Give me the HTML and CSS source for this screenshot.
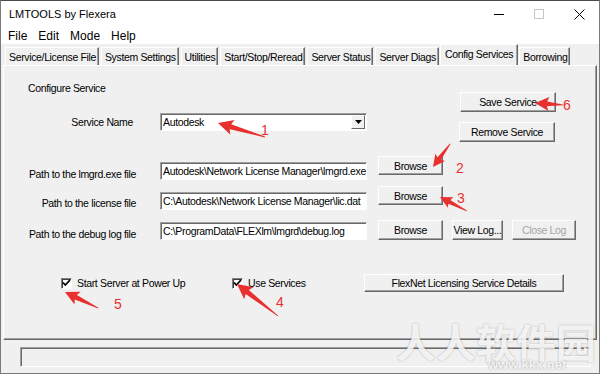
FILE: index.html
```html
<!DOCTYPE html>
<html lang="en">
<head>
    <meta charset="UTF-8">
    <title>LMTOOLS by Flexera</title>
    <link rel="stylesheet" href="styles.css">
</head>
<body>
    <div class="window">
        <div class="titlebar">
            <span class="title">LMTOOLS by Flexera</span>
            <span class="ctl">
                <svg width="10" height="10" viewBox="0 0 10 10"><path d="M0 5.5H10" stroke="#000" stroke-width="1"/></svg>
            </span>
            <span class="ctl">
                <svg width="10" height="10" viewBox="0 0 10 10"><rect x="0.5" y="0.5" width="9" height="9" fill="none" stroke="#c6c6c6"/></svg>
            </span>
            <span class="ctl">
                <svg width="11" height="11" viewBox="0 0 11 11"><path d="M0.5 0.5L10.5 10.5M10.5 0.5L0.5 10.5" stroke="#000" stroke-width="1"/></svg>
            </span>
        </div>
        <div class="menubar">
            <span>File</span>
            <span>Edit</span>
            <span>Mode</span>
            <span>Help</span>
        </div>

        <div class="tabs">
            <div class="tab">Service/License File</div>
            <div class="tab">System Settings</div>
            <div class="tab">Utilities</div>
            <div class="tab">Start/Stop/Reread</div>
            <div class="tab">Server Status</div>
            <div class="tab">Server Diags</div>
            <div class="tab active">Config Services</div>
            <div class="tab">Borrowing</div>
        </div>

        <div class="panel">
            <div class="top">
                <div class="top-left">
                    <div class="heading">Configure Service</div>
                    <div class="service-row">
                        <span class="label label-service">Service Name</span>
                        <div class="field combo">
                            <span>Autodesk</span>
                            <span class="drop">
                                <svg width="7" height="4" viewBox="0 0 7 4"><path d="M0 0H7L3.5 4Z" fill="#000"/></svg>
                            </span>
                        </div>
                    </div>
                </div>
                <div class="top-right">
                    <button class="btn btn-save">Save Service</button>
                    <button class="btn btn-remove">Remove Service</button>
                </div>
            </div>

            <div class="path-row">
                <span class="label l1">Path to the lmgrd.exe file</span>
                <div class="field">Autodesk\Network License Manager\lmgrd.exe</div>
                <button class="btn browse">Browse</button>
            </div>
            <div class="path-row">
                <span class="label l2">Path to the license file</span>
                <div class="field">C:\Autodesk\Network License Manager\lic.dat</div>
                <button class="btn browse">Browse</button>
            </div>
            <div class="path-row">
                <span class="label l1">Path to the debug log file</span>
                <div class="field">C:\ProgramData\FLEXlm\lmgrd\debug.log</div>
                <button class="btn browse low">Browse</button>
                <button class="btn viewlog low">View Log...</button>
                <button class="btn closelog low" disabled>Close Log</button>
            </div>

            <div class="check-row">
                <label class="check check-power">
                    <span class="box"><svg width="9" height="8" viewBox="0 0 9 8"><path d="M1 3.5L3.3 6L8 1" fill="none" stroke="#000" stroke-width="1.8"/></svg></span>
                    Start Server at Power Up
                </label>
                <label class="check check-services">
                    <span class="box"><svg width="9" height="8" viewBox="0 0 9 8"><path d="M1 3.5L3.3 6L8 1" fill="none" stroke="#000" stroke-width="1.8"/></svg></span>
                    Use Services
                </label>
                <button class="btn details">FlexNet Licensing Service Details</button>
            </div>
        </div>

        <div class="statusbar"></div>

        <div class="watermark">人人软件园</div>
        <div class="watermark-url">www.kkx.net</div>

        <svg class="notes" width="600" height="374" viewBox="0 0 600 374">
            <g fill="#e8312f">
                <path transform="translate(218 123) rotate(16.6)" d="M0 0L15 -7.5L13 -2.6L49 -0.4L49 0.4L13 2.6L15 7.5Z"/>
                <path transform="translate(433 167) rotate(-53.5)" d="M0 0L12 -6L10.5 -2.2L29 -0.4L29 0.4L10.5 2.2L12 6Z"/>
                <path transform="translate(440 197) rotate(27.4)" d="M0 0L12 -6L10.5 -2.2L30 -0.4L30 0.4L10.5 2.2L12 6Z"/>
                <path transform="translate(237 284) rotate(38)" d="M0 0L15 -7.5L13 -2.6L52 -0.4L52 0.4L13 2.6L15 7.5Z"/>
                <path transform="translate(65 292) rotate(25.9)" d="M0 0L14 -7L12 -2.4L37 -0.4L37 0.4L12 2.4L14 7Z"/>
                <path transform="translate(535 103) rotate(4)" d="M0 0L14 -7L12 -2.4L28 -0.4L28 0.4L12 2.4L14 7Z"/>
                <text class="num" x="265" y="135">1</text>
                <text class="num" x="460" y="173">2</text>
                <text class="num" x="461" y="203">3</text>
                <text class="num" x="280" y="307">4</text>
                <text class="num" x="118" y="309">5</text>
                <text class="num" x="567" y="110">6</text>
            </g>
        </svg>
    </div>
</body>
</html>
```

FILE: styles.css
```css
body {
    margin: 0;
    background: #ffffff;
}
.window {
    position: relative;
    width: 600px;
    height: 374px;
    box-sizing: border-box;
    border: 1px solid #7a7a7a;
    border-top-color: #4a4a4a;
    background-color: #f0f0f0;
    overflow: hidden;
    font-family: "Liberation Sans", Arial, sans-serif;
    font-size: 10.5px;
    letter-spacing: -0.35px;
    color: #000;
}
.titlebar {
    height: 26px;
    display: flex;
    align-items: center;
    background-color: #fff;
}
.title {
    flex: 1;
    padding-left: 8px;
    font-size: 11px;
    letter-spacing: 0;
}
.ctl {
    width: 40px;
    height: 26px;
    display: flex;
    align-items: center;
    justify-content: center;
}
.menubar {
    height: 17px;
    display: flex;
    align-items: center;
    gap: 11px;
    padding-left: 7px;
    background-color: #fff;
    font-size: 12px;
    letter-spacing: 0;
}

/* tabs */
.tabs {
    display: flex;
    gap: 2px;
    height: 18px;
    margin-top: 3px;
    padding-left: 4px;
    position: relative;
    z-index: 2;
}
.tab {
    height: 18px;
    box-sizing: border-box;
    padding: 0 2px 0 3px;
    line-height: 18px;
    border-top: 1px solid #fff;
    border-left: 1px solid #fff;
    border-right: 1px solid #696969;
    box-shadow: inset -1px 0 #a0a0a0;
    white-space: nowrap;
}
.tab.active {
    height: 21px;
    margin-top: -3px;
    margin-left: -1px;
    margin-right: -1px;
    padding: 0 4px 0 4px;
    line-height: 19px;
    background-color: #f0f0f0;
}
.panel {
    height: 275px;
    margin: 0 2px;
    box-sizing: border-box;
    border: 1px solid;
    border-color: #fff #696969 #696969 #fff;
    box-shadow: inset -1px -1px #a0a0a0;
}

/* top section */
.top {
    display: flex;
    height: 90px;
}
.top-left {
    width: 363px;
}
.heading {
    padding-left: 24px;
    margin-top: 15px;
    line-height: 14px;
}
.service-row {
    display: flex;
    align-items: center;
    margin-top: 18px;
}
.label {
    width: 156px;
    box-sizing: border-box;
    padding-right: 24px;
    text-align: right;
    line-height: 14px;
    white-space: nowrap;
}
.label-service {
    padding-right: 27px;
}
.top-right {
    display: flex;
    flex-direction: column;
    align-items: flex-start;
    padding-left: 92px;
    padding-top: 26px;
}

/* controls */
.field {
    width: 207px;
    height: 18px;
    box-sizing: border-box;
    padding-left: 2px;
    background-color: #fff;
    border: 1px solid;
    border-color: #a0a0a0 #fff #fff #a0a0a0;
    box-shadow: inset 1px 1px #696969;
    line-height: 16px;
    white-space: nowrap;
    overflow: hidden;
}
.combo {
    display: flex;
    align-items: center;
    justify-content: space-between;
    padding-right: 1px;
}
.drop {
    width: 14px;
    height: 14px;
    box-sizing: border-box;
    display: flex;
    align-items: center;
    justify-content: center;
    background-color: #f0f0f0;
    border: 1px solid;
    border-color: #fff #696969 #696969 #fff;
}
.btn {
    height: 19px;
    box-sizing: border-box;
    padding: 0;
    font-family: inherit;
    font-size: 10.5px;
    letter-spacing: -0.35px;
    color: #000;
    background-color: #f0f0f0;
    border: 1px solid;
    border-color: #fff #696969 #696969 #fff;
    box-shadow: inset -1px -1px #a0a0a0;
    white-space: nowrap;
}
.btn-save {
    width: 96px;
    height: 20px;
    margin-left: 1px;
}
.btn-remove {
    width: 96px;
    height: 20px;
    margin-top: 10px;
}
.path-row {
    display: flex;
    align-items: flex-start;
    height: 30px;
}
.path-row .field {
    margin-top: 6px;
}
.l1 {
    margin-top: 11px;
}
.l2 {
    margin-top: 10px;
}
.browse {
    width: 65px;
    margin-left: 11px;
}
.low {
    height: 20px;
    margin-top: 4px;
}
.viewlog {
    width: 51px;
    margin-left: 9px;
}
.closelog {
    width: 64px;
    margin-left: 9px;
    color: #a6a6a6;
}

/* checkboxes */
.check-row {
    display: flex;
    align-items: center;
    height: 18px;
    margin-top: 28px;
    padding-left: 57px;
}
.check {
    display: flex;
    align-items: center;
    gap: 5px;
    line-height: 14px;
}
.check-power {
    width: 171px;
}
.check-services {
    width: 132px;
}
.box {
    width: 11px;
    height: 11px;
    box-sizing: border-box;
    display: flex;
    align-items: center;
    justify-content: center;
    background-color: #fff;
    border: 1px solid;
    border-color: #808080 #fff #fff #808080;
    box-shadow: inset 1px 1px #404040;
}
.details {
    width: 200px;
    height: 18px;
}
.statusbar {
    height: 20px;
    width: 571px;
    margin: 7px 0 0 19px;
    box-sizing: border-box;
    border: 1px solid;
    border-color: #a0a0a0 #fff #fff #a0a0a0;
    box-shadow: inset 1px 1px #696969;
}

/* overlays */
.watermark {
    position: absolute;
    left: 395px;
    top: 316px;
    font-family: "Noto Sans CJK SC", sans-serif;
    font-weight: bold;
    font-size: 40px;
    line-height: 48px;
    letter-spacing: 0;
    color: rgba(255, 255, 255, 0.85);
    text-shadow: 0 0 2px rgba(0, 0, 0, 0.3);
    white-space: nowrap;
}
.watermark-url {
    position: absolute;
    left: 487px;
    top: 357px;
    font-weight: bold;
    font-size: 13px;
    line-height: 14px;
    letter-spacing: 0;
    color: rgba(255, 255, 255, 0.85);
    text-shadow: 0 0 2px rgba(0, 0, 0, 0.35);
}
.notes {
    position: absolute;
    left: -1px;
    top: -1px;
    pointer-events: none;
}
.num {
    font-size: 14px;
    letter-spacing: 0;
    text-anchor: middle;
}
```
